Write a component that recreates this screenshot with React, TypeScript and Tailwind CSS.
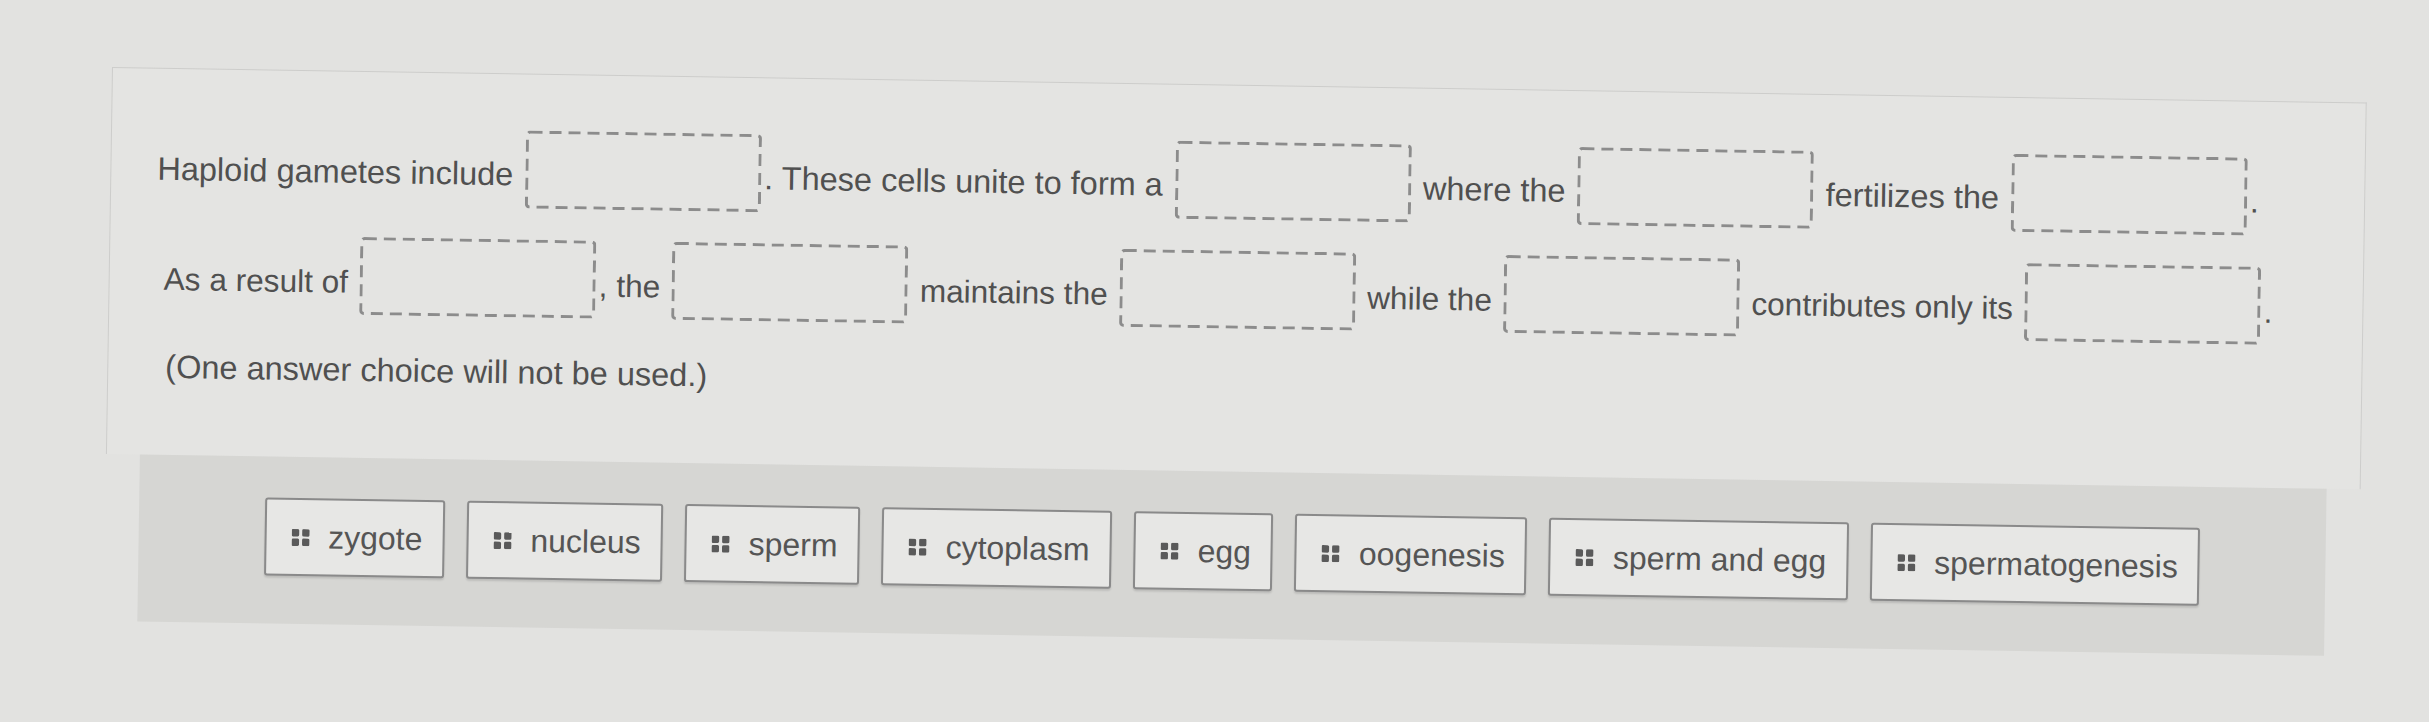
import React from 'react'

const answers = ['zygote', 'nucleus', 'sperm', 'cytoplasm', 'egg', 'oogenesis', 'sperm and egg', 'spermatogenesis']

// empty drop target, dashed outline
function Blank() {
    return (
        <svg width="236" height="78" viewBox="0 0 236 78" className="mx-[3px] shrink-0 text-[#8c8c8c]">
            <rect x="1.5" y="1.5" width="233" height="75" rx="3" fill="none" stroke="currentColor" strokeWidth="3" strokeDasharray="12 7" />
        </svg>
    )
}

function Words({ children }: { children: React.ReactNode }) {
    return <span className="whitespace-pre pt-[12px]">{children}</span>
}

function GripIcon() {
    return (
        <svg width="18" height="17" viewBox="0 0 18 17" className="shrink-0 text-[#5a5a5a]">
            <rect x="0" y="0" width="7.5" height="7.5" rx="1.5" fill="currentColor" />
            <rect x="10.5" y="0" width="7.5" height="7.5" rx="1.5" fill="currentColor" />
            <rect x="0" y="9.5" width="7.5" height="7.5" rx="1.5" fill="currentColor" />
            <rect x="10.5" y="9.5" width="7.5" height="7.5" rx="1.5" fill="currentColor" />
        </svg>
    )
}

export default function App() {
    return (
        <div className="h-[722px] w-full overflow-hidden bg-[#e2e2e0] font-['Liberation_Sans',Arial,sans-serif]">
            <div className="pl-[112px] pt-[67px]">
                <div className="w-[2255px] origin-top-left rotate-[0.9deg] leading-[1.15]">

                    {/* sentence with drop targets */}
                    <div className="flex flex-col border border-b-0 border-[#cdcdcb] bg-[#e4e4e2] pb-[69px] pl-[46px] pt-[56px] text-[32.5px] text-[#505050]">
                        <div className="flex h-[78px] items-center">
                            <Words>Haploid gametes include </Words>
                            <Blank />
                            <Words>. These cells unite to form a </Words>
                            <Blank />
                            <Words> where the </Words>
                            <Blank />
                            <Words> fertilizes the </Words>
                            <Blank />
                            <Words>.</Words>
                        </div>
                        <div className="mt-[31px] flex h-[78px] items-center pl-[8px] text-[31.6px]">
                            <Words>As a result of </Words>
                            <Blank />
                            <Words>, the </Words>
                            <Blank />
                            <Words> maintains the </Words>
                            <Blank />
                            <Words> while the </Words>
                            <Blank />
                            <Words> contributes only its </Words>
                            <Blank />
                            <Words>.</Words>
                        </div>
                        <p className="mt-[37px] pl-[11px]">(One answer choice will not be used.)</p>
                    </div>

                    {/* answer bank */}
                    <div className="mx-[34px] flex h-[167px] items-start justify-center gap-[22px] bg-[#d6d6d3] pt-[41px]">
                        {answers.map(a => (
                            <div
                                key={a}
                                className="flex h-[78px] items-center gap-[19px] rounded-[3px] border-2 border-[#8a8a8a] bg-[#e7e7e5] pl-[25px] pr-[20px] text-[32px] text-[#555555] shadow-[0_2px_2px_rgba(0,0,0,0.12)]"
                            >
                                <GripIcon />
                                <span className="whitespace-pre">{a}</span>
                            </div>
                        ))}
                    </div>
                </div>
            </div>
        </div>
    )
}
